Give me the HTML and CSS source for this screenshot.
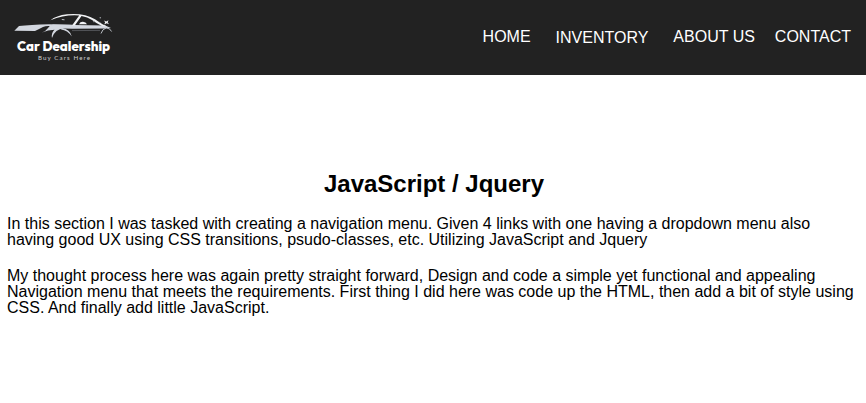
FILE: index.html
```html
<!DOCTYPE html>
<html lang="en">
<head>
<meta charset="utf-8">
<title>Car Dealership</title>
<link rel="stylesheet" href="styles.css">
</head>
<body>
<header class="header">
  <a class="logo" href="#">
    <svg class="logo-art" viewBox="0 0 130 75" width="130" height="75">
      <path class="silver" d="M14.3 30.8 L19 26 Q30 24.9 49 24.2 L75 24.8 L50 26 Q46 25.6 43 27 Q38.5 29.4 35 30.9 Z"/>
      <path class="silver" d="M42 32.5 Q46 31 48 28 Q49.5 25.4 53 24.6 L74 24.9 L105 25.4 L111 28 L107 28.4 L72 28.8 L64 28.6 Q55 29 52 38 Q51 33 54.5 29.8 Q48 29.8 42 32.5 Z"/>
      <path class="silver" d="M62 28 Q70 29 71.8 36.5 Q67.5 30 61 29.4 Z"/>
      <path class="white" d="M50.5 20.3 Q56 15.6 67 14.3 Q84 12.7 95 19.3 Q98.5 21.8 103 24.6 L107.5 26.4 L102 26 Q97 23.8 92 20 Q87.5 16.7 81.5 15.9 L74.8 25.5 L72 25.5 L79.2 15.5 Q65 14.3 50.5 20.3 Z"/>
      <path class="white" d="M79 24.2 Q80.2 21.6 83 21.8 Q86 22 87 24.2 Z"/>
      <path class="rim" d="M106 28 Q102.4 29 101 33.5 M107 28 Q110 28.4 111.6 31.5"/>
      <path class="dim" d="M72 30.6 L100 30.4"/>
      <path class="rim" d="M61.8 19.5 L64.5 19.8"/>
      <path class="white" d="M104 20.6 L106.2 21.5 L108.5 20.2 L107.7 22.2 L109 24.2 L106.6 23.2 L104.3 24.4 L105.1 22.3 Z"/>
      <g class="gray"><circle cx="94" cy="21.6" r=".8"/><circle cx="100.3" cy="17.8" r=".8"/><circle cx="99.8" cy="22.3" r=".6"/></g>
      <text class="logo-name" x="17" y="51" textLength="93" lengthAdjust="spacingAndGlyphs">Car Dealership</text>
      <text class="logo-tag" x="38" y="60" textLength="52">Buy Cars Here</text>
    </svg>
  </a>
  <nav class="nav">
    <a href="#">HOME</a>
    <a class="dropdown" href="#">INVENTORY</a>
    <a href="#">ABOUT US</a>
    <a href="#">CONTACT</a>
  </nav>
</header>
<main class="content">
  <h2>JavaScript / Jquery</h2>
  <p>In this section I was tasked with creating a navigation menu. Given 4 links with one having a dropdown menu also having good UX using CSS transitions, psudo-classes, etc. Utilizing JavaScript and Jquery</p>
  <p>My thought process here was again pretty straight forward, Design and code a simple yet functional and appealing Navigation menu that meets the requirements. First thing I did here was code up the HTML, then add a bit of style using CSS. And finally add little JavaScript.</p>
</main>
</body>
</html>
```
FILE: styles.css
```css
* {
  box-sizing: border-box;
  margin: 0;
  padding: 0;
}

body {
  background: #fff;
  color: #000;
  font: 16px/16px "Liberation Sans", Arial, sans-serif;
}

.header {
  display: flex;
  justify-content: space-between;
  height: 75px;
  background: #222;
}

.logo-art {
  display: block;
}

.silver { fill: #d3d7df; }
.white { fill: #f1f2f4; }
.gray { fill: #999da2; }
.rim { fill: none; stroke: #b9bdc3; stroke-width: 1; }
.dim { fill: none; stroke: #66696e; stroke-width: 0.7; }

.logo-name {
  fill: #fff;
  font: 800 13px Outfit, Montserrat, Inter, sans-serif;
}

.logo-tag {
  fill: #d0d0d0;
  font: 400 6.2px Lato, sans-serif;
}

.nav {
  display: flex;
  padding: 29px 15px 0 0;
}

.nav a {
  height: 16px;
  margin-left: 20px;
  color: #fff;
  text-decoration: none;
  white-space: nowrap;
}

.nav .dropdown {
  margin: 1px 5px 0 25px;
}

.content {
  padding: 97px 7px 0;
}

.content h2 {
  margin-bottom: 20px;
  padding-left: 2px;
  font-size: 24px;
  line-height: 24px;
  text-align: center;
}

.content p {
  margin-bottom: 20px;
}
```
